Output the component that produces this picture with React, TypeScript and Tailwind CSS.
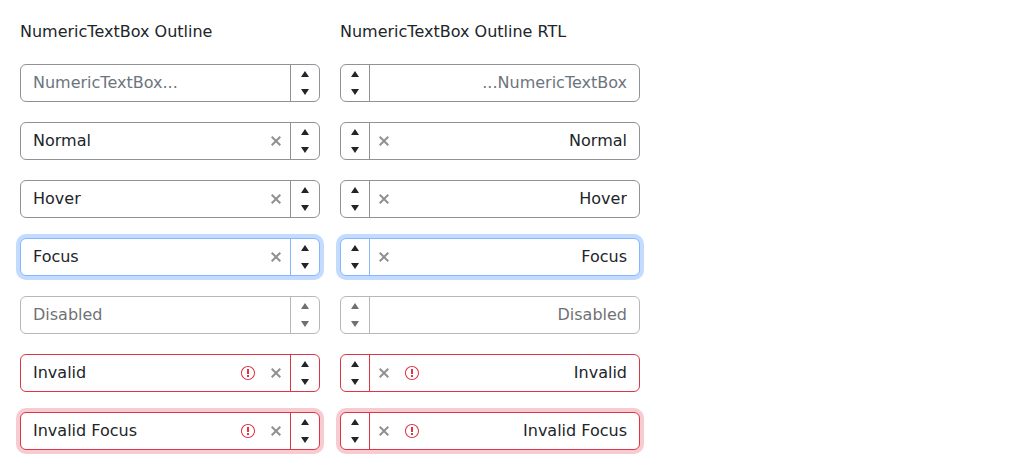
import React from 'react';
import clsx from 'clsx';

type Item = {
  value?: string;
  name: string;
  clear?: boolean;
  disabled?: boolean;
  focused?: boolean;
  invalid?: boolean;
};

const items: Item[] = [
  { name: 'Placeholder' },
  { name: 'Normal', value: 'Normal', clear: true },
  { name: 'Hover', value: 'Hover', clear: true },
  { name: 'Focus', value: 'Focus', clear: true, focused: true },
  { name: 'Disabled', value: 'Disabled', disabled: true },
  { name: 'Invalid', value: 'Invalid', clear: true, invalid: true },
  { name: 'Invalid Focus', value: 'Invalid Focus', clear: true, invalid: true, focused: true },
];

function Icon({ d }: { d: string }) {
  return (
    <svg viewBox="0 0 512 512" className="size-4 fill-current" aria-hidden="true">
      <path d={d} />
    </svg>
  );
}

const caretUp = 'M256 160 128 352h256z';
const caretDown = 'm256 352 128-192H128z';
const cross =
  'M416 141.3 301.3 256 416 370.7 370.7 416 256 301.3 141.3 416 96 370.7 210.7 256 96 141.3 141.3 96 256 210.7 370.7 96z';
const warning =
  'M256 32C132.3 32 32 132.3 32 256s100.3 224 224 224 224-100.3 224-224S379.7 32 256 32m0 416c-106 0-192-86-192-192S150 64 256 64s192 86 192 192-86 192-192 192m-32-128h64v64h-64zm0-192h64v160h-64z';

function NumericTextBox({ item, rtl }: { item: Item; rtl: boolean }) {
  const { name, value, clear, disabled, focused, invalid } = item;
  const line = invalid ? 'border-[#dc3545]' : focused ? 'border-[#86b7fe]' : 'border-[#909294]';
  return (
    <div
      className={clsx(
        'flex rounded-[6px] border bg-white',
        line,
        disabled && 'opacity-65',
        focused && (invalid ? 'ring-4 ring-[#dc3545]/25' : 'ring-4 ring-[#0d6efd]/25'),
      )}
    >
      <input
        type="text"
        aria-label={rtl ? `${name} RTL` : name}
        aria-invalid={invalid}
        defaultValue={value}
        placeholder="NumericTextBox..."
        disabled={disabled}
        className="min-w-0 flex-1 bg-transparent px-3 py-1.5 text-base outline-none placeholder:text-[#6c757d]"
      />
      {invalid && (
        <span className="flex w-7 items-center justify-center text-[#dc3545]">
          <Icon d={warning} />
        </span>
      )}
      {clear && (
        <button type="button" aria-label="Clear" className="flex w-7 items-center justify-center opacity-50">
          <Icon d={cross} />
        </button>
      )}
      <span className={clsx('flex flex-col border-s', line)}>
        <button type="button" aria-label="Increase value" disabled={disabled} className="flex w-7 flex-1 items-center justify-center">
          <Icon d={caretUp} />
        </button>
        <button type="button" aria-label="Decrease value" disabled={disabled} className="flex w-7 flex-1 items-center justify-center">
          <Icon d={caretDown} />
        </button>
      </span>
    </div>
  );
}

function Column({ title, rtl = false }: { title: string; rtl?: boolean }) {
  return (
    <section className="flex flex-col gap-5">
      <h2 className="text-base">{title}</h2>
      <div dir={rtl ? 'rtl' : 'ltr'} className="flex flex-col gap-5">
        {items.map((item) => (
          <NumericTextBox key={item.name} item={item} rtl={rtl} />
        ))}
      </div>
    </section>
  );
}

export default function App() {
  return (
    <main className="grid grid-cols-[repeat(2,minmax(0,300px))] gap-5 bg-white p-5 font-['DejaVu_Sans',sans-serif] text-[#212529]">
      <Column title="NumericTextBox Outline" />
      <Column title="NumericTextBox Outline RTL" rtl />
    </main>
  );
}
